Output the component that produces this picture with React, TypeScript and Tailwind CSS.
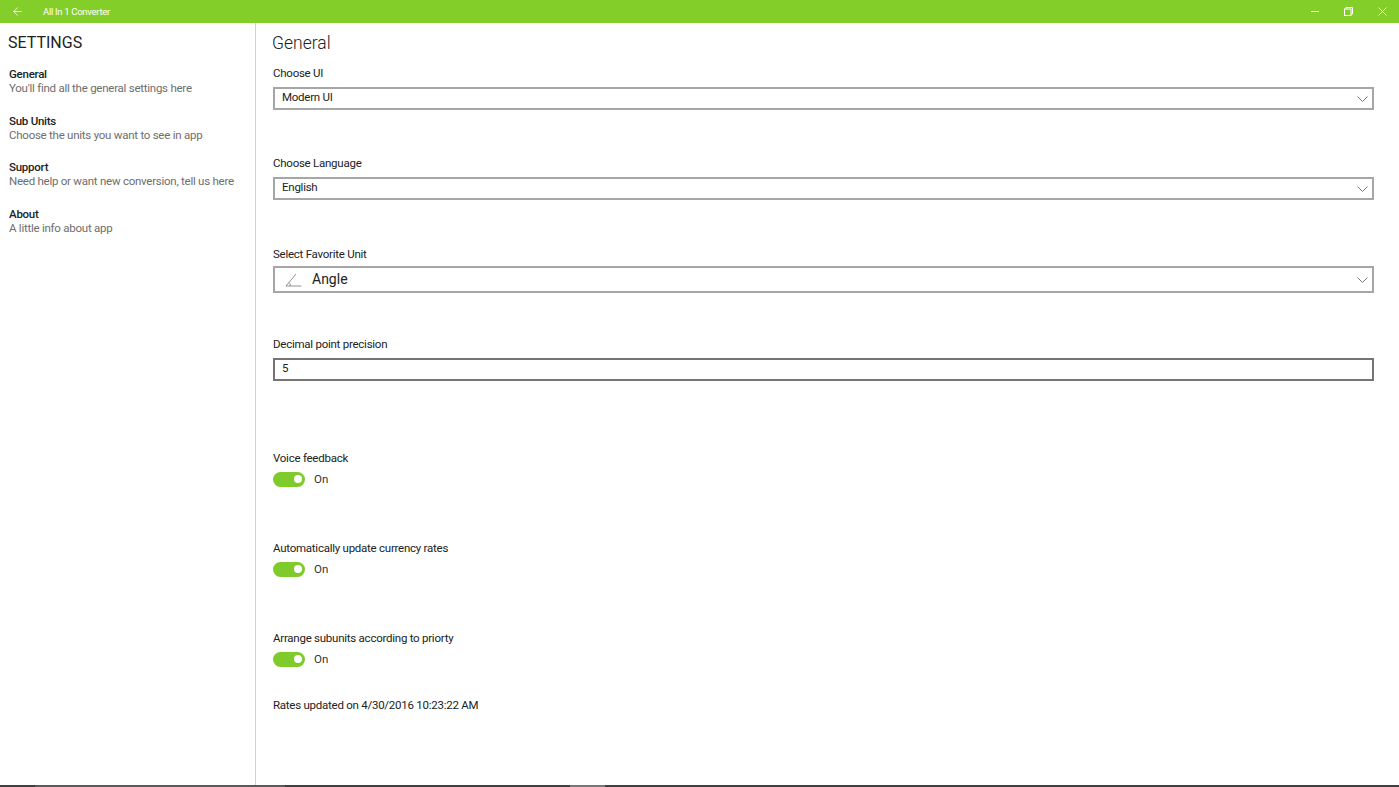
import { ArrowLeft } from "lucide-react";

const navItems = [
    { title: "General", text: "You'll find all the general settings here" },
    { title: "Sub Units", text: "Choose the units you want to see in app" },
    { title: "Support", text: "Need help or want new conversion, tell us here" },
    { title: "About", text: "A little info about app" },
];

const labelClass = "h-[18px] text-[11.5px] leading-[18px] tracking-[-0.25px] text-[#222]";

function Chevron() {
    return (
        <svg width="11" height="6" viewBox="0 0 11 6" fill="none" stroke="#777" strokeWidth="1">
            <path d="M0.5 0.5L5.5 5.5L10.5 0.5" />
        </svg>
    );
}

function Toggle({ label, className }: { label: string; className: string }) {
    return (
        <div className={className}>
            <div className={labelClass}>{label}</div>
            <div className="mt-[4px] flex h-[16px] items-center">
                <div className="flex h-[15px] w-[32px] items-center justify-end rounded-full bg-[#7fcb2b] pr-[3px]">
                    <div className="h-[8px] w-[8px] rounded-full bg-white" />
                </div>
                <span className="ml-[9px] pt-[2px] text-[11.5px] text-[#333]">On</span>
            </div>
        </div>
    );
}

function Select({ value, className }: { value: string; className: string }) {
    return (
        <div className={`flex h-[23px] items-center justify-between border-2 border-[#a6a6a6] pl-[7px] pr-[4px] text-[11.5px] tracking-[-0.25px] text-[#222] ${className}`}>
            <span className="pb-[2px]">{value}</span>
            <Chevron />
        </div>
    );
}

export default function App() {
    return (
        <div className="flex h-[787px] w-[1399px] flex-col overflow-hidden bg-white font-['Roboto',sans-serif]">
            <header className="flex h-[23px] shrink-0 items-center bg-[#84ce2a] text-white">
                <ArrowLeft size={13} strokeWidth={1.5} className="ml-[11px]" />
                <span className="ml-[19px] pt-px text-[9.5px] tracking-[-0.3px]">All In 1 Converter</span>
                <div className="ml-auto flex items-center">
                    <div className="mr-[25px] h-px w-[8px] bg-white" />
                    <svg width="9" height="9" viewBox="0 0 9 9" fill="none" stroke="currentColor" className="mr-[25px]">
                        <rect x="0.5" y="2" width="6.5" height="6.5" />
                        <path d="M2 2V0.5H8.5V7H7" />
                    </svg>
                    <svg width="9" height="9" viewBox="0 0 9 9" fill="none" stroke="currentColor" strokeWidth="0.9" className="mr-[12px]">
                        <path d="M0.5 0.5L8.5 8.5M8.5 0.5L0.5 8.5" />
                    </svg>
                </div>
            </header>

            <div className="flex min-h-0 flex-1">
                <aside className="w-[256px] shrink-0 border-r border-[#d0d0d0] pl-[8px] pt-[9px]">
                    <h1 className="h-[22px] text-[16px] leading-[22px] text-[#222]">SETTINGS</h1>
                    <nav className="mt-[13px] pl-px">
                        {navItems.map((item) => (
                            <div key={item.title} className="mb-[17.7px] h-[29px]">
                                <div className="text-[11.5px] leading-[14px] font-medium tracking-[-0.25px] text-[#222]">{item.title}</div>
                                <div className="text-[11.5px] leading-[15px] tracking-[-0.25px] text-[#6e6e6e]">{item.text}</div>
                            </div>
                        ))}
                    </nav>
                </aside>

                <main className="flex-1 pl-[17px] pr-[25px] pt-[9px]">
                    <h2 className="ml-[-1px] h-[22px] text-[17.5px] leading-[22px] font-light text-[#222]">General</h2>
                    <div className={`mt-[10px] ${labelClass}`}>Choose UI</div>
                    <Select value="Modern UI" className="mt-[5px]" />
                    <div className={`mt-[44px] ${labelClass}`}>Choose Language</div>
                    <Select value="English" className="mt-[5px]" />
                    <div className={`mt-[45px] ${labelClass}`}>Select Favorite Unit</div>
                    <div className="mt-[3px] flex h-[27px] items-center justify-between border-2 border-[#a6a6a6] pl-[10px] pr-[4px] text-[#222]">
                        <div className="flex items-center">
                            <svg width="17" height="14" viewBox="0 0 17 14" fill="none" stroke="#777" strokeWidth="0.8">
                                <path d="M11 1L1 13H16.5" />
                                <path d="M4 9.5C5 10.5 5.3 11.5 5.3 13" />
                            </svg>
                            <span className="ml-[10px] text-[14px]">Angle</span>
                        </div>
                        <Chevron />
                    </div>
                    <div className={`mt-[42px] ${labelClass}`}>Decimal point precision</div>
                    <div className="mt-[5px] flex h-[23px] items-center border-2 border-[#757575] pb-[2px] pl-[7px] text-[11.5px] text-[#222]">5</div>
                    <Toggle label="Voice feedback" className="mt-[68px]" />
                    <Toggle label="Automatically update currency rates" className="mt-[52px]" />
                    <Toggle label="Arrange subunits according to priorty" className="mt-[52px]" />
                    <div className={`mt-[29px] ${labelClass}`}>Rates updated on 4/30/2016 10:23:22 AM</div>
                </main>
            </div>
            <div className="flex h-[2px] shrink-0 bg-[#404040]">
                <div className="ml-[35px] w-[250px] bg-[#5a5a5a]" />
                <div className="ml-[285px] w-[35px] bg-[#777]" />
            </div>
        </div>
    );
}
